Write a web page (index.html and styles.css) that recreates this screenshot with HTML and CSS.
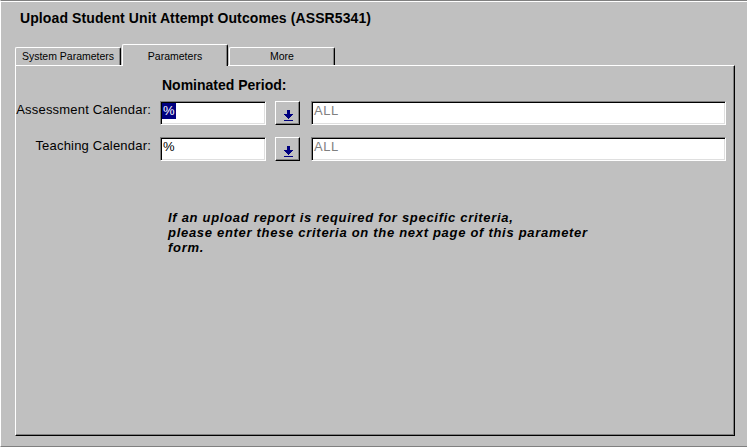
FILE: index.html
```html
<!DOCTYPE html>
<html>
<head>
<meta charset="utf-8">
<title>Upload Student Unit Attempt Outcomes</title>
<link rel="stylesheet" href="styles.css">
</head>
<body>
<div class="window">
  <div class="title">Upload Student Unit Attempt Outcomes (ASSR5341)</div>
  <div class="tabs">
    <div class="tab">System Parameters</div>
    <div class="tab tab-active">Parameters</div>
    <div class="tab">More</div>
  </div>
  <div class="panel">
    <div class="nominated">Nominated Period:</div>
    <div class="row">
      <div class="label">Assessment Calendar:</div>
      <div class="field code"><span class="sel">%</span></div>
      <div class="btn">
        <svg width="9" height="11" viewBox="0 0 9 11" shape-rendering="crispEdges">
          <rect x="3" y="0" width="3" height="4" fill="#000080"/>
          <rect x="0" y="4" width="9" height="1" fill="#000080"/>
          <rect x="1" y="5" width="7" height="1" fill="#000080"/>
          <rect x="2" y="6" width="5" height="1" fill="#000080"/>
          <rect x="3" y="7" width="3" height="1" fill="#000080"/>
          <rect x="4" y="8" width="1" height="1" fill="#000080"/>
          <rect x="0" y="10" width="9" height="1" fill="#000080"/>
        </svg>
      </div>
      <div class="field desc">ALL</div>
    </div>
    <div class="row row-second">
      <div class="label">Teaching Calendar:</div>
      <div class="field code"><span class="plain">%</span></div>
      <div class="btn">
        <svg width="9" height="11" viewBox="0 0 9 11" shape-rendering="crispEdges">
          <rect x="3" y="0" width="3" height="4" fill="#000080"/>
          <rect x="0" y="4" width="9" height="1" fill="#000080"/>
          <rect x="1" y="5" width="7" height="1" fill="#000080"/>
          <rect x="2" y="6" width="5" height="1" fill="#000080"/>
          <rect x="3" y="7" width="3" height="1" fill="#000080"/>
          <rect x="4" y="8" width="1" height="1" fill="#000080"/>
          <rect x="0" y="10" width="9" height="1" fill="#000080"/>
        </svg>
      </div>
      <div class="field desc">ALL</div>
    </div>
    <p class="note">If an upload report is required for specific criteria,<br>please enter these criteria on the next page of this parameter<br>form.</p>
  </div>
</div>
</body>
</html>
```

FILE: styles.css
```css
html, body {
  margin: 0;
  padding: 0;
  background: #c0c0c0;
}

.window {
  width: 747px;
  height: 447px;
  box-sizing: border-box;
  background: #c0c0c0;
  border-top: 1px solid #808080;
  border-bottom: 1px solid #808080;
  border-left: 1px solid #ffffff;
  box-shadow: inset 0 1px 0 #ffffff;
  display: flex;
  flex-direction: column;
  font-family: "Liberation Sans", Arial, sans-serif;
  color: #000;
}

.title {
  margin: 9px 0 0 19px;
  height: 16px;
  font-size: 14px;
  font-weight: bold;
  line-height: 16px;
  letter-spacing: 0.1px;
}

.tabs {
  display: flex;
  align-items: flex-end;
  gap: 1px;
  margin: 18px 0 0 14px;
  height: 21px;
  position: relative;
  z-index: 2;
}

.tab {
  width: 106px;
  height: 18px;
  box-sizing: border-box;
  border-top: 1px solid #ffffff;
  border-left: 1px solid #ffffff;
  border-right: 1px solid #000000;
  border-radius: 2px 2px 0 0;
  box-shadow: inset -1px 0 0 #808080;
  background: #c0c0c0;
  font-size: 10.5px;
  line-height: 14px;
  padding-top: 1px;
  text-align: center;
}

.tab-active {
  height: 22px;
  margin-bottom: -1px;
  padding-top: 4px;
}

.panel {
  margin-left: 14px;
  width: 720px;
  height: 371px;
  box-sizing: border-box;
  border-top: 1px solid #ffffff;
  border-left: 1px solid #ffffff;
  border-right: 1px solid #000000;
  border-bottom: 1px solid #000000;
  box-shadow: inset -1px -1px 0 #808080;
  display: flex;
  flex-direction: column;
  position: relative;
  z-index: 1;
}

.nominated {
  margin: 12px 0 0 146px;
  font-size: 14px;
  font-weight: bold;
  line-height: 15px;
}

.row {
  display: flex;
  align-items: flex-start;
  height: 24px;
  margin-top: 8px;
}

.row-second {
  margin-top: 12px;
}

.label {
  width: 135px;
  padding: 1px 1px 0 0;
  text-align: right;
  font-size: 13px;
  line-height: 15px;
  letter-spacing: 0.2px;
}

.field {
  height: 24px;
  box-sizing: border-box;
  background: #ffffff;
  border-top: 1px solid #808080;
  border-left: 1px solid #808080;
  border-bottom: 1px solid #ffffff;
  border-right: 1px solid #ffffff;
  box-shadow: inset 1px 1px 0 #000000, inset -1px -1px 0 #dfdfdf;
  font-size: 13px;
}

.code {
  width: 106px;
  margin-left: 8px;
  padding: 1px 0 0 1px;
}

.sel, .plain {
  display: inline-block;
  line-height: 16px;
  padding: 0 1px;
}

.sel {
  background: #000080;
  color: #ffffff;
}

.desc {
  width: 415px;
  margin-left: 11px;
  padding: 1px 0 0 2px;
  line-height: 15px;
  color: #808080;
  letter-spacing: 0.5px;
}

.btn {
  width: 25px;
  height: 24px;
  margin-left: 9px;
  box-sizing: border-box;
  border-top: 1px solid #ffffff;
  border-left: 1px solid #ffffff;
  border-right: 1px solid #000000;
  border-bottom: 1px solid #000000;
  box-shadow: inset -1px -1px 0 #808080;
  background: #c0c0c0;
  padding: 8px 0 0 8px;
  display: flex;
  align-items: flex-start;
}

.btn svg {
  display: block;
}

.note {
  margin: 49px 0 0 152px;
  font-size: 13px;
  font-weight: bold;
  font-style: italic;
  line-height: 15px;
  letter-spacing: 0.7px;
}
```
